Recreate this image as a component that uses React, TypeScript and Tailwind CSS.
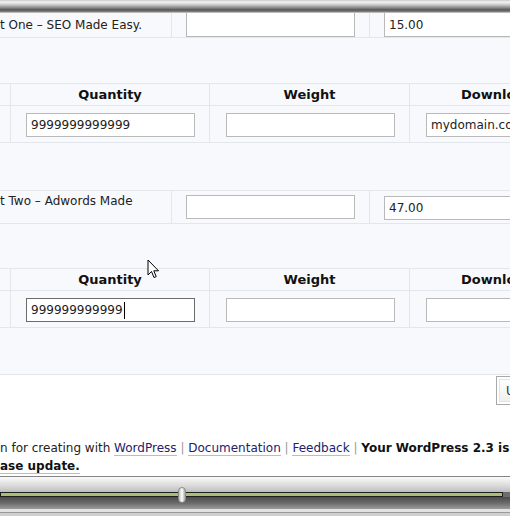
import React from "react";

const line = "border-[#e3e6eb]";

function Field({
  value,
  focused,
  className = "",
}: {
  value?: string;
  focused?: boolean;
  className?: string;
}) {
  return (
    <div
      className={`relative flex h-[24px] items-center overflow-hidden whitespace-nowrap bg-white pl-[4px] text-[12px] text-[#222] border ${
        focused ? "border-[#6b6b6b]" : "border-[#b9b9b9]"
      } ${className}`}
    >
      {value}
      {focused ? <span className="ml-px inline-block h-[17px] w-px bg-black" /> : null}
    </div>
  );
}

function ProductRow({ name, price }: { name: string; price: string }) {
  return (
    <div className={`grid grid-cols-[172px_198px_1fr] border-b ${line}`}>
      <div className={`border-r ${line} whitespace-nowrap pt-[2px] text-[12px] text-[#222]`}>{name}</div>
      <div className={`border-r ${line} pl-[14px]`}>
        <Field className="w-[169px]" />
      </div>
      <div className="pl-[14px]">
        <Field value={price} className="w-[200px]" />
      </div>
    </div>
  );
}

function DetailsTable({ qty, download, focused }: { qty: string; download?: string; focused?: boolean }) {
  return (
    <div className={`border-t ${line}`}>
      <div className={`grid h-[22px] grid-cols-[11px_199px_200px_200px] border-b ${line} text-[13px] font-bold text-[#111]`}>
        <div className={`border-r ${line}`} />
        <div className={`border-r ${line} flex items-center justify-center`}>Quantity</div>
        <div className={`border-r ${line} flex items-center justify-center`}>Weight</div>
        <div className="flex items-center whitespace-nowrap pl-[51px]">Download URL</div>
      </div>
      <div className={`grid h-[37px] grid-cols-[11px_199px_200px_200px] border-b ${line}`}>
        <div className={`border-r ${line}`} />
        <div className={`border-r ${line} pl-[15px] pt-[7px]`}>
          <Field value={qty} focused={focused} className="w-[169px]" />
        </div>
        <div className={`border-r ${line} pl-[16px] pt-[7px]`}>
          <Field className="w-[169px]" />
        </div>
        <div className="pl-[16px] pt-[7px]">
          <Field value={download} className="w-[200px] pl-0" />
        </div>
      </div>
    </div>
  );
}

export default function App() {
  return (
    <div className="relative h-[516px] w-[510px] overflow-hidden bg-white font-['DejaVu_Sans',Verdana,sans-serif]">
      {/* window top chrome */}
      <div className="h-[13px] bg-[linear-gradient(to_bottom,#c9c9c9_0px,#f2f2f2_2px,#d9d9d9_4px,#9a9a9a_7px,#555555_10px,#8c8c8c_12px,#e9e9e9_13px)]" />

      <div className={`h-[362px] border-b ${line} bg-[#f8f9fc]`}>
        <div className={`grid h-[25px] grid-cols-[172px_198px_1fr] border-b ${line}`}>
          <div className={`border-r ${line} flex items-center whitespace-nowrap text-[12px] text-[#222]`}>
            t One – SEO Made Easy.
          </div>
          <div className={`border-r ${line} pl-[14px]`}>
            <Field className="h-[22px] w-[169px] border-t-0" />
          </div>
          <div className="pl-[14px]">
            <Field value="15.00" className="h-[22px] w-[200px] border-t-0" />
          </div>
        </div>

        <div className="h-[45px]" />
        <DetailsTable qty="9999999999999" download="mydomain.com/download" />

        <div className="h-[47px]" />
        <div className={`border-t ${line}`}>
          <div className={`grid h-[33px] grid-cols-[172px_198px_1fr] border-b ${line}`}>
            <div className={`border-r ${line} whitespace-nowrap pt-[1px] text-[12px] text-[#222]`}>
              t Two – Adwords Made
            </div>
            <div className={`border-r ${line} pl-[14px] pt-[4px]`}>
              <Field className="h-[23px] w-[169px]" />
            </div>
            <div className="pl-[14px] pt-[5px]">
              <Field value="47.00" className="h-[23px] w-[200px]" />
            </div>
          </div>
        </div>

        <div className="h-[44px]" />
        <DetailsTable qty="999999999999" focused />
      </div>

      <div className="h-[101px] whitespace-nowrap">
        <div className="pl-[496px] pt-[1px]">
          <button className="h-[29px] border border-[#a9a9a9] bg-white px-[2px] py-[2px]">
            <span className="flex h-full items-center border border-[#e2e2e2] bg-[linear-gradient(to_bottom,#ffffff,#f0f0f0)] px-[6px] text-[12px] text-[#333]">
              Update Options »
            </span>
          </button>
        </div>
        <div className="mt-[34px] text-[12px] leading-[18px] text-[#222]">
          <div>
            n for creating with{" "}
            <a className="border-b border-[#b8bccb] text-[#21216e]">WordPress</a>{" "}
            <span className="text-[#999]">|</span>{" "}
            <a className="border-b border-[#b8bccb] text-[#21216e]">Documentation</a>{" "}
            <span className="text-[#999]">|</span>{" "}
            <a className="border-b border-[#b8bccb] text-[#21216e]">Feedback</a>{" "}
            <span className="text-[#999]">|</span>{" "}
            <b className="text-[#111]">Your WordPress 2.3 is out of date.</b>
          </div>
          <div>
            <b className="border-b border-[#b8bccb] text-[#111]">ase update.</b>
          </div>
        </div>
      </div>

      {/* player bar */}
      <div className="relative h-[40px] border-t border-[#858585]">
        <div className="h-[15px] bg-[linear-gradient(to_bottom,#fbfbfb,#d9d9d9_60%,#bdbdbd)]" />
        <div className="flex h-[5px] bg-[#6d6d6d]">
          <div className="h-[5px] w-[503px] border border-[#1e1e1e] bg-[#a8bd76]" />
        </div>
        <div className="h-[12px] bg-[linear-gradient(to_bottom,#4b4b4b,#6a6a6a_50%,#9b9b9b)]" />
        <div className="h-[3px] bg-[#e2e2e2]" />
        <div className="h-px bg-[#9a9a9a]" />
        <div className="h-[3px] bg-[#cfcfcf]" />
        <div className="absolute left-[178px] top-[10px] h-[16px] w-[8px] rounded-full border border-[#8a8a8a] bg-[linear-gradient(to_right,#bdbdbd,#ffffff_50%,#a5a5a5)]" />
      </div>

      {/* mouse pointer */}
      <svg className="absolute left-[147px] top-[259px]" width="13" height="21" viewBox="0 0 13 21">
        <path
          d="M1 1 L1 16 L4.5 12.5 L7 18.5 L9.2 17.6 L6.8 11.8 L11.5 11.8 Z"
          fill="#fff"
          stroke="#000"
          strokeWidth="1"
          strokeLinejoin="round"
        />
      </svg>
    </div>
  );
}
